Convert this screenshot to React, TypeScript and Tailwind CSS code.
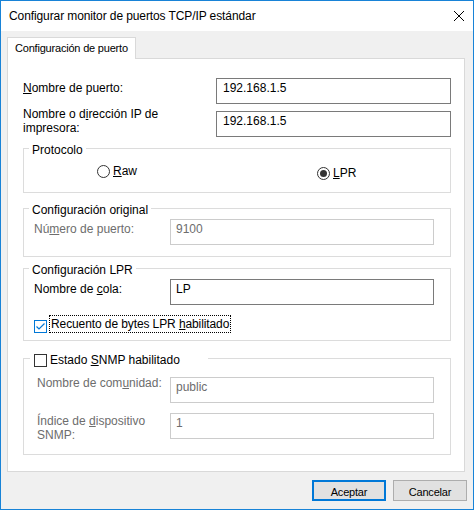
import type { ReactNode } from "react";

function Radio({ checked }: { checked?: boolean }) {
  return (
    <span className="w-[13px] h-[13px] shrink-0 rounded-full border border-[#333333] bg-white flex items-center justify-center">
      {checked && <span className="w-[7px] h-[7px] rounded-full bg-[#333333]" />}
    </span>
  );
}

function CheckBox({ checked }: { checked?: boolean }) {
  if (!checked) {
    return <span className="block w-[13px] h-[13px] shrink-0 border border-[#333333] bg-white" />;
  }
  return (
    <span className="flex w-[13px] h-[13px] shrink-0 border border-[#0078d7] bg-white items-center justify-center">
      <svg width="11" height="11" viewBox="0 0 11 11">
        <path d="M1.5 5.5 L4 8 L9.5 2.5" fill="none" stroke="#0078d7" strokeWidth="1.2" />
      </svg>
    </span>
  );
}

// group box: top border line with the caption sitting over it
function Group({ legend, className, children }: { legend: ReactNode; className: string; children?: ReactNode }) {
  return (
    <div className={className}>
      <div className="-mt-[6px] ml-[5px] w-fit bg-white px-[3px]">{legend}</div>
      {children}
    </div>
  );
}

export default function App() {
  return (
    <div className="w-[474px] h-[510px] border border-[#1883d7] bg-[#f0f0f0] flex flex-col font-['Liberation_Sans',Arial,sans-serif] text-[12px] leading-[14px] text-black">
      {/* title bar */}
      <div className="h-[30px] shrink-0 bg-white flex items-center justify-between pl-[8px] pr-[9px]">
        <span className="tracking-[-0.1px]">Configurar monitor de puertos TCP/IP estándar</span>
        <svg width="10" height="10" viewBox="0 0 10 10" className="-mt-[1px]">
          <path d="M0 0 L10 10 M10 0 L0 10" stroke="#000" strokeWidth="1" />
        </svg>
      </div>

      <div className="flex-1 flex flex-col pl-[6px] pr-[8px] pt-[6px]">
        {/* tab */}
        <div className="relative z-10 -mb-[1px] w-[129px] h-[22px] border border-b-0 border-[#d9d9d9] bg-white pl-[7px] pt-[3px] text-[11px] tracking-[-0.2px] whitespace-nowrap">
          Configuración de puerto
        </div>

        {/* panel */}
        <div className="w-[458px] h-[414px] border border-[#d9d9d9] bg-white pl-[15px] pr-[13px] flex flex-col">
          <div className="mt-[19px] flex items-start">
            <div className="w-[193px] mt-[3px]">
              <u>N</u>ombre de puerto:
            </div>
            <div className="w-[235px] h-[26px] border border-[#7a7a7a] pl-[6px] pt-[2px] leading-[15px]">192.168.1.5</div>
          </div>

          <div className="mt-[7px] flex items-start">
            <div className="w-[193px] -mt-[4px]">
              Nombre o d<u>i</u>rección IP de
              <br />
              impresora:
            </div>
            <div className="w-[235px] h-[26px] border border-[#7a7a7a] pl-[6px] pt-[2px] leading-[15px]">192.168.1.5</div>
          </div>

          <Group legend="Protocolo" className="mt-[11px] w-[428px] h-[45px] border border-[#dcdcdc]">
            <div className="flex items-start">
              <div className="ml-[73px] w-[220px] mt-[7px] flex items-center gap-[3px]">
                <Radio />
                <span>
                  <u>R</u>aw
                </span>
              </div>
              <div className="mt-[9px] flex items-center gap-[3px]">
                <Radio checked />
                <span>
                  <u>L</u>PR
                </span>
              </div>
            </div>
          </Group>

          <Group legend="Configuración original" className="mt-[15px] w-[428px] h-[49px] border border-[#dcdcdc]">
            <div className="mt-[2px] pl-[10px] flex items-start">
              <div className="w-[136px] mt-[3px] text-[#6d6d6d]">
                Nú<u>m</u>ero de puerto:
              </div>
              <div className="w-[264px] h-[26px] border border-[#cccccc] pl-[5px] pt-[2px] leading-[15px] text-[#6d6d6d]">9100</div>
            </div>
          </Group>

          <Group legend="Configuración LPR" className="mt-[11px] w-[428px] h-[73px] border border-[#dcdcdc]">
            <div className="mt-[2px] pl-[10px] flex items-start">
              <div className="w-[136px] mt-[3px]">
                Nombre de <u>c</u>ola:
              </div>
              <div className="w-[264px] h-[26px] border border-[#7a7a7a] pl-[5px] pt-[2px] leading-[15px]">LP</div>
            </div>
            <div className="mt-[10px] pl-[10px] flex items-start gap-[2px]">
              <span className="mt-[5px]">
                <CheckBox checked />
              </span>
              <span className="border border-dotted border-black px-[1px] leading-[16px] tracking-[-0.1px]">
                Recuento de bytes LPR <u>h</u>abilitado
              </span>
            </div>
          </Group>

          {/* SNMP group: caption is a checkbox */}
          <div className="mt-[17px] w-[428px] h-[97px] border border-[#dcdcdc]">
            <div className="-mt-[6px] ml-[6px] w-[178px] bg-white pl-[4px] flex items-start gap-[3px]">
              <span className="mt-[1px]">
                <CheckBox />
              </span>
              <span>
                Estado <u>S</u>NMP habilitado
              </span>
            </div>
            <div className="mt-[10px] pl-[13px] flex items-start">
              <div className="w-[133px] -mt-[1px] text-[#6d6d6d]">
                Nombre de com<u>u</u>nidad:
              </div>
              <div className="w-[264px] h-[26px] border border-[#cccccc] pl-[5px] pt-[2px] leading-[15px] text-[#6d6d6d]">public</div>
            </div>
            <div className="mt-[10px] pl-[13px] flex items-start">
              <div className="w-[133px] mt-[1px] text-[#6d6d6d]">
                Índice de <u>d</u>ispositivo
                <br />
                SNMP:
              </div>
              <div className="w-[264px] h-[26px] border border-[#cccccc] pl-[5px] pt-[2px] leading-[15px] text-[#6d6d6d]">1</div>
            </div>
          </div>
        </div>

        {/* buttons */}
        <div className="mt-[8px] -mr-[2px] flex justify-end gap-[7px] text-[11px] tracking-[-0.2px]">
          <button className="w-[74px] h-[21px] border-2 border-[#0078d7] bg-[#e1e1e1] flex items-center justify-center pt-[2px]">
            Aceptar
          </button>
          <button className="w-[74px] h-[21px] border border-[#adadad] bg-[#e1e1e1] flex items-center justify-center pt-[2px]">
            Cancelar
          </button>
        </div>
      </div>
    </div>
  );
}
